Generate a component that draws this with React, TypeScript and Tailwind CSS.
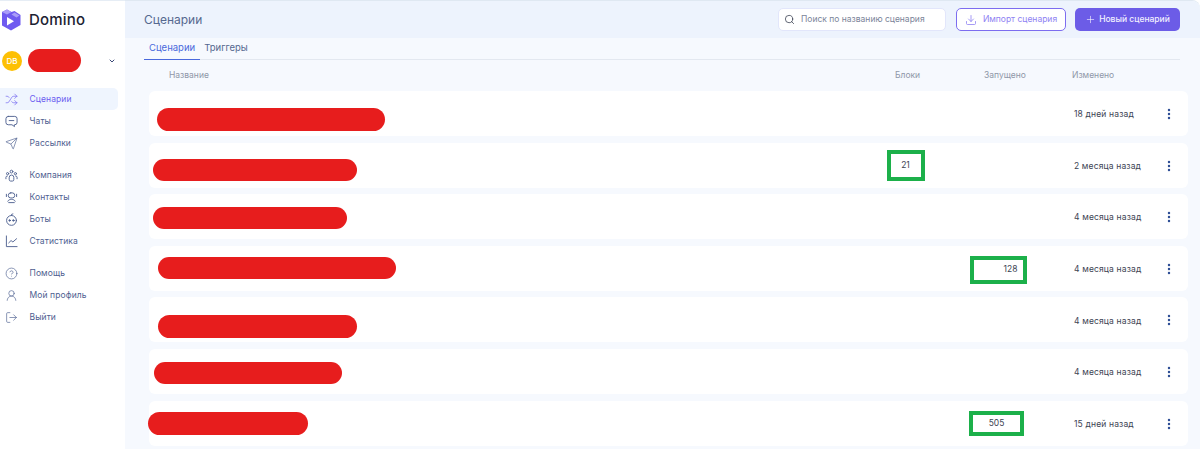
import { ChevronDown, CircleHelp, Download, EllipsisVertical, LogOut, Plus, Search, Send, Shuffle, UserRound } from 'lucide-react'
import type { ReactNode } from 'react'

function Glyph({ children }: { children: ReactNode }) {
  return (
    <svg width="13" height="13" viewBox="0 0 14 14" fill="none" stroke="currentColor" strokeWidth="1" strokeLinecap="round" strokeLinejoin="round" className="shrink-0">
      {children}
    </svg>
  )
}

const ChatIcon = () => (
  <Glyph>
    <path d="M3.500 1.500h7a2.500 2.500 0 0 1 2.500 2.500v4a2.500 2.500 0 0 1-2.500 2.500H10l.2 2-2.700-2h-4A2.500 2.500 0 0 1 1 8V4a2.500 2.500 0 0 1 2.500-2.500z" />
    <path d="M4.500 6h5" />
  </Glyph>
)

const CompanyIcon = () => (
  <Glyph>
    <circle cx="7" cy="2.800" r="1.500" />
    <circle cx="2.800" cy="5" r="1.200" />
    <circle cx="11.200" cy="5" r="1.200" />
    <path d="M4.500 9a2.500 2.500 0 0 1 5 0v2.500a1.500 1.500 0 0 1-1.500 1.500H6a1.500 1.500 0 0 1-1.500-1.500z" />
    <path d="M1 10.500V9a1.500 1.500 0 0 1 1.500-1.500M13 10.500V9a1.500 1.500 0 0 0-1.500-1.500" />
  </Glyph>
)

const ContactsIcon = () => (
  <Glyph>
    <rect x="3.500" y="2" width="7" height="5.500" rx="2.700" />
    <path d="M1.500 3.500v2.500M12.500 3.500v2.500" />
    <path d="M3 11c.6-1.400 2.200-2 4-2s3.400.6 4 2" />
    <path d="M4 12.500h6" />
  </Glyph>
)

const BotIcon = () => (
  <Glyph>
    <circle cx="7" cy="8" r="5.300" />
    <path d="M7 2.700V1.500l1.500-.5" />
    <circle cx="5" cy="8" r=".8" fill="currentColor" />
    <circle cx="9" cy="8" r=".8" fill="currentColor" />
  </Glyph>
)

const StatsIcon = () => (
  <Glyph>
    <path d="M1.500 1v11.500H13" />
    <path d="M4 8.500l2.500-2.500 2 1.500L12.500 4" />
  </Glyph>
)

const size13 = { size: 13, strokeWidth: 1.2 }

const navGroups = [
  [
    { label: 'Сценарии', icon: <Shuffle {...size13} className="shrink-0" />, active: true },
    { label: 'Чаты', icon: <ChatIcon /> },
    { label: 'Рассылки', icon: <Send {...size13} className="shrink-0" /> },
  ],
  [
    { label: 'Компания', icon: <CompanyIcon /> },
    { label: 'Контакты', icon: <ContactsIcon /> },
    { label: 'Боты', icon: <BotIcon /> },
    { label: 'Статистика', icon: <StatsIcon /> },
  ],
  [
    { label: 'Помощь', icon: <CircleHelp {...size13} className="shrink-0" /> },
    { label: 'Мой профиль', icon: <UserRound {...size13} className="shrink-0" /> },
    { label: 'Выйти', icon: <LogOut {...size13} className="shrink-0" /> },
  ],
]

const rows = [
  { changed: '18 дней назад', redact: 'left-[8px] top-[17px] w-[228px] h-[23px]' },
  { changed: '2 месяца назад', redact: 'left-[4px] top-[16px] w-[204px] h-[22px]', blocks: '21' },
  { changed: '4 месяца назад', redact: 'left-[4px] top-[13px] w-[194px] h-[22px]' },
  { changed: '4 месяца назад', redact: 'left-[9px] top-[11px] w-[238px] h-[22px]', started: '128', box: 'mt-[3px] h-[28px] w-[57px] pl-[24px]' },
  { changed: '4 месяца назад', redact: 'left-[9px] top-[18px] w-[199px] h-[23px]' },
  { changed: '4 месяца назад', redact: 'left-[5px] top-[13px] w-[188px] h-[22px]' },
  { changed: '15 дней назад', redact: 'left-[-1px] top-[11px] w-[160px] h-[23px]', started: '505', box: '-ml-px h-[25px] w-[55px]' },
]

function Logo() {
  return (
    <svg width="20" height="22" viewBox="0 0 20 22" className="shrink-0">
      <path d="M1 3 6 .5l4.500 2.500 3-1L19.500 6v10L10 21.500 1 16.500z" fill="#6f5af0" />
      <path d="M1 3 6 .5l4.500 2.500L6 5.500z" fill="#a99cf8" />
      <path d="M10.500 5.500l3-2 5 3-3 2z" fill="#a99cf8" />
      <path d="M6 8v8.500l7-4.300z" fill="#ffffff" />
    </svg>
  )
}

export default function App() {
  return (
    <div className="flex h-[449px] w-[1200px] overflow-hidden bg-white font-['Inter',sans-serif]">
      <aside className="flex w-[125px] shrink-0 flex-col border-t border-[#e6edf5]">
        <div className="flex h-[37px] items-center gap-[8px] pl-[1px] pt-[1px]">
          <Logo />
          <span className="text-[15px] font-medium tracking-[0.2px] text-[#1c2233]">Domino</span>
        </div>
        <div className="relative mt-[11px] flex h-[24px] items-center pl-[2px] pr-[9px]">
          <div className="flex h-[20px] w-[20px] items-center justify-center rounded-full bg-[#fdc004] text-[8px] font-medium text-white">DB</div>
          <ChevronDown className="ml-auto text-[#3b4a78]" size={8} strokeWidth={3} />
          <div className="absolute left-[28px] top-[0px] h-[23px] w-[53px] rounded-full bg-[#e71d1d]" />
        </div>
        <nav className="mt-[15px] flex flex-col gap-[10px]">
          {navGroups.map((group) => (
            <div key={group[0].label} className="flex flex-col">
              {group.map((item) => (
                <div
                  key={item.label}
                  className={`flex h-[22px] w-[118px] items-center gap-[11.500px] rounded-r-[5px] pl-[5px] text-[8.500px] tracking-[0.1px] ${
                    item.active ? 'bg-[#eff5fe] text-[#6b5cf0]' : 'text-[#4e6090]'
                  }`}
                >
                  <span className="flex w-[13px] justify-center">{item.icon}</span>
                  <span>{item.label}</span>
                </div>
              ))}
            </div>
          ))}
        </nav>
      </aside>

      <main className="flex min-w-0 flex-1 flex-col rounded-tr-[8px] border-t border-[#dfe8f2] bg-[#f6f9fe]">
        <header className="flex h-[37px] shrink-0 items-center rounded-tr-[8px] bg-[#edf3fd] pl-[19px] pr-[20px]">
          <h1 className="text-[12px] font-normal text-[#55688f]">Сценарии</h1>
          <div className="ml-auto flex h-[23px] w-[168px] items-center gap-[6px] rounded-[5px] border border-[#e2e6fb] bg-white pl-[5px]">
            <Search size={11} strokeWidth={1.6} className="shrink-0 text-[#2d3446]" />
            <span className="overflow-hidden whitespace-nowrap text-[8.500px] text-[#7b8499]">Поиск по названию сценария</span>
          </div>
          <button className="ml-[10px] flex h-[23px] w-[110px] items-center justify-center gap-[6px] rounded-[5px] border border-[#7d6df0] bg-white text-[8.500px] text-[#8f82f3]">
            <Download size={12} strokeWidth={1.6} />
            Импорт сценария
          </button>
          <button className="ml-[9px] flex h-[23px] w-[105px] items-center justify-center gap-[3px] rounded-[5px] bg-[#6c5ce7] text-[8.500px] font-medium text-[#f2f0ff]">
            <Plus size={11} strokeWidth={1.4} />
            Новый сценарий
          </button>
        </header>

        <div className="ml-[19px] mr-[20px] flex h-[22px] items-end border-b border-[#e3e8f0] text-[9.500px]">
          <span className="-mb-px border-b border-[#4a69dc] px-[5px] pb-[4px] text-[#4a69dc]">Сценарии</span>
          <span className="pl-[4px] pb-[4px] text-[#55688f]">Триггеры</span>
        </div>

        <div className="flex h-[31px] shrink-0 items-center text-[8.500px] text-[#8f97a8]">
          <span className="ml-[44px] w-[726px]">Название</span>
          <span className="w-[89px]">Блоки</span>
          <span className="w-[88px]">Запущено</span>
          <span>Изменено</span>
        </div>

        <div className="flex flex-col gap-[6.600px] pl-[24px] pr-[12px]">
          {rows.map((row) => (
            <div key={row.redact} className="relative flex h-[45px] shrink-0 items-center rounded-[6px] bg-white text-[8.500px] text-[#3c4353]">
              <div className={`absolute rounded-full bg-[#e71d1d] ${row.redact}`} />
              <span className="ml-[738px] w-[38px]">
                {row.blocks && (
                  <span className="flex h-[31px] items-center justify-center border-4 border-[#1cb04a] pr-px">{row.blocks}</span>
                )}
              </span>
              <span className="ml-[45px] w-[57px]">
                {row.started && (
                  <span className={`flex items-center justify-center border-4 border-[#1cb04a] ${row.box}`}>{row.started}</span>
                )}
              </span>
              <span className="ml-[47px] w-[90px] pt-[2px] tracking-[0.15px]">{row.changed}</span>
              <EllipsisVertical size={14} strokeWidth={2.2} className="-ml-[2px] mt-px text-[#2f4f96]" />
            </div>
          ))}
        </div>
      </main>
    </div>
  )
}
